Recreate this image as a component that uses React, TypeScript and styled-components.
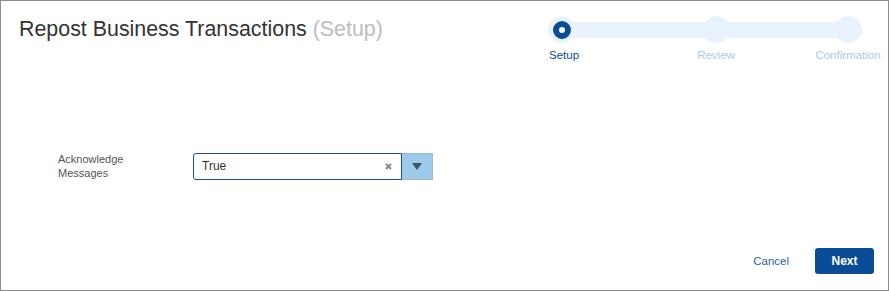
import React from 'react';
import styled, { createGlobalStyle } from 'styled-components';

const GlobalStyle = createGlobalStyle`
  html, body {
    margin: 0;
    padding: 0;
    background: #fff;
  }
  body {
    font-family: "Liberation Sans", Arial, sans-serif;
  }
`;

export const Panel = styled.div`
  box-sizing: border-box;
  width: 889px;
  height: 291px;
  border: 1px solid #8c8c8c;
  display: flex;
  flex-direction: column;
  background: #fff;
`;

export const Header = styled.div`
  display: flex;
  justify-content: space-between;
  align-items: flex-start;
  height: 70px;
  padding: 0 6px 0 18px;
`;

export const Title = styled.h1`
  margin: 16px 0 0;
  font-size: 21.4px;
  line-height: 25px;
  font-weight: normal;
  color: #333;

  span {
    color: #bdbdbd;
  }
`;

export const Stepper = styled.div`
  position: relative;
  display: flex;
  margin-top: 15px;

  &::before {
    content: '';
    position: absolute;
    left: 14px;
    right: 34px;
    top: 6px;
    height: 16px;
    background: #e8f3fd;
  }
`;

export const Step = styled.div<{ $offset: number; $width: number; $start?: boolean }>`
  position: relative;
  display: flex;
  flex-direction: column;
  align-items: ${p => (p.$start ? 'flex-start' : 'center')};
  width: ${p => p.$width}px;
  margin-left: ${p => p.$offset}px;
`;

export const Dot = styled.div<{ $active?: boolean }>`
  box-sizing: border-box;
  width: 27px;
  height: 27px;
  border-radius: 50%;
  background: #e8f3fd;
  display: flex;
  align-items: center;
  justify-content: center;

  &::after {
    content: '';
    display: ${p => (p.$active ? 'block' : 'none')};
    box-sizing: border-box;
    width: 18px;
    height: 18px;
    border-radius: 50%;
    border: 6px solid #0b4c97;
    background: #fff;
  }
`;

export const StepLabel = styled.div<{ $active?: boolean }>`
  margin-top: 6px;
  padding-left: ${p => (p.$active ? '1px' : '0')};
  font-size: 11.5px;
  line-height: 13px;
  white-space: nowrap;
  color: ${p => (p.$active ? '#0b4c97' : '#a3cdf0')};
`;

export const FormRow = styled.div`
  display: flex;
  align-items: center;
  padding: 81px 0 0 57px;
`;

export const FieldLabel = styled.label`
  width: 135px;
  font-size: 11px;
  line-height: 14px;
  color: #555;
`;

export const Select = styled.div`
  display: flex;
  height: 27px;
`;

export const SelectInput = styled.div`
  box-sizing: border-box;
  width: 209px;
  height: 27px;
  display: flex;
  align-items: center;
  justify-content: space-between;
  padding: 0 9px 0 8px;
  border: 1px solid #1d4f91;
  border-radius: 3px 0 0 3px;
  font-size: 12px;
  color: #333;
`;

export const SelectButton = styled.div`
  box-sizing: border-box;
  width: 31px;
  height: 27px;
  background: #9ccaeb;
  border: 1px solid #a9b8c4;
  border-left: none;
  display: flex;
  align-items: center;
  justify-content: center;
`;

export const Footer = styled.div`
  margin-top: auto;
  display: flex;
  justify-content: flex-end;
  align-items: center;
  gap: 26px;
  padding: 0 14px 16px 0;
`;

export const LinkButton = styled.button`
  border: none;
  background: none;
  padding: 0;
  font-family: inherit;
  font-size: 11.5px;
  color: #2c5fa3;
  cursor: pointer;
`;

export const PrimaryButton = styled.button`
  width: 59px;
  height: 26px;
  border: none;
  border-radius: 3px;
  background: #0b4c97;
  color: #fff;
  font-family: inherit;
  font-size: 12px;
  font-weight: bold;
  cursor: pointer;
`;

const steps = [
  { label: 'Setup', offset: 0, width: 28, active: true },
  { label: 'Review', offset: 121, width: 38 },
  { label: 'Confirmation', offset: 79, width: 68 },
];

export const App = () => {
  return (
    <>
      <GlobalStyle />
      <Panel>
        <Header>
          <Title>
            Repost Business Transactions <span>(Setup)</span>
          </Title>
          <Stepper>
            {steps.map(s => (
              <Step key={s.label} $offset={s.offset} $width={s.width} $start={s.active}>
                <Dot $active={s.active} />
                <StepLabel $active={s.active}>{s.label}</StepLabel>
              </Step>
            ))}
          </Stepper>
        </Header>
        <FormRow>
          <FieldLabel>
            Acknowledge
            <br />
            Messages
          </FieldLabel>
          <Select>
            <SelectInput>
              <span>True</span>
              <svg width="7" height="7" viewBox="0 0 7 7">
                <path d="M1 1 L6 6 M6 1 L1 6" stroke="#8a8a8a" strokeWidth="2" />
              </svg>
            </SelectInput>
            <SelectButton>
              <svg width="10" height="7" viewBox="0 0 10 7">
                <path d="M0 0 H10 L5 7 Z" fill="#3f5668" />
              </svg>
            </SelectButton>
          </Select>
        </FormRow>
        <Footer>
          <LinkButton>Cancel</LinkButton>
          <PrimaryButton>Next</PrimaryButton>
        </Footer>
      </Panel>
    </>
  );
};

export default App;
